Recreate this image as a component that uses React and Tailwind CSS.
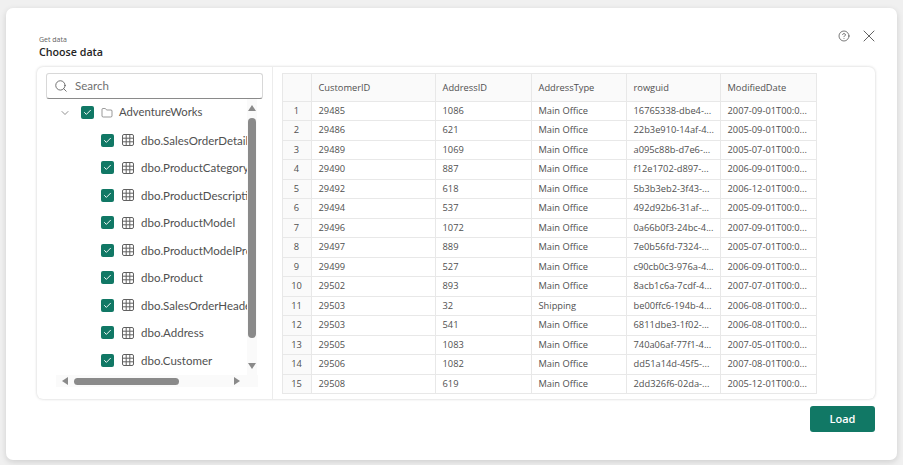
import React from "react";
import { Search, ChevronDown, Folder, X, CircleHelp, Check } from "lucide-react";

const tables = ["dbo.SalesOrderDetail","dbo.ProductCategory","dbo.ProductDescription","dbo.ProductModel","dbo.ProductModelProductDescription","dbo.Product","dbo.SalesOrderHeader","dbo.Address","dbo.Customer"];
const rows = [
["29485","1086","Main Office","16765338-dbe4-...","2007-09-01T00:0..."],
["29486","621","Main Office","22b3e910-14af-4...","2005-09-01T00:0..."],
["29489","1069","Main Office","a095c88b-d7e6-...","2005-07-01T00:0..."],
["29490","887","Main Office","f12e1702-d897-...","2006-09-01T00:0..."],
["29492","618","Main Office","5b3b3eb2-3f43-...","2006-12-01T00:0..."],
["29494","537","Main Office","492d92b6-31af-...","2005-09-01T00:0..."],
["29496","1072","Main Office","0a66b0f3-24bc-4...","2007-09-01T00:0..."],
["29497","889","Main Office","7e0b56fd-7324-...","2005-07-01T00:0..."],
["29499","527","Main Office","c90cb0c3-976a-4...","2006-09-01T00:0..."],
["29502","893","Main Office","8acb1c6a-7cdf-4...","2007-07-01T00:0..."],
["29503","32","Shipping","be00ffc6-194b-4...","2006-08-01T00:0..."],
["29503","541","Main Office","6811dbe3-1f02-...","2006-08-01T00:0..."],
["29505","1083","Main Office","740a06af-77f1-4...","2007-05-01T00:0..."],
["29506","1082","Main Office","dd51a14d-45f5-...","2007-08-01T00:0..."],
["29508","619","Main Office","2dd326f6-02da-...","2005-12-01T00:0..."],
];
const heads = ["CustomerID","AddressID","AddressType","rowguid","ModifiedDate"];

function Box() {
  return (
    <span className="flex h-[13px] w-[13px] shrink-0 items-center justify-center rounded-[2px] bg-[#117865]">
      <Check size={9} strokeWidth={2.5} className="text-white" />
    </span>
  );
}
function GridIcon() {
  return (
    <svg width="12" height="12" viewBox="0 0 12 12" fill="none" stroke="#616161" strokeWidth="1" className="shrink-0">
      <rect x="0.5" y="0.5" width="11" height="11" rx="1.5" />
      <path d="M4.2 .5V11.5M7.8 .5V11.5M.5 4.2H11.5M.5 7.8H11.5" />
    </svg>
  );
}

export default function App() {
  return (
    <div className="h-[465px] w-[903px] overflow-hidden bg-[#f0f0f0] pl-[6px] pt-[8px] font-['Open_Sans','Noto_Sans',sans-serif]">
      <div className="flex h-[452px] w-[891px] flex-col rounded-[7px] bg-white pl-[31px] pr-[22px] shadow-[0_2px_6px_rgba(0,0,0,0.14)]">
        <div className="flex h-[59px] shrink-0 items-start justify-between pl-[2px]">
          <div className="pt-[27px]">
            <div className="text-[7px] leading-[10px] text-[#616161]">Get data</div>
            <div className="text-[10.7px] font-semibold leading-[14px] text-[#242424]">Choose data</div>
          </div>
          <div className="-mr-[4px] flex items-center gap-[9px] pt-[18px]">
            <CircleHelp size={12} strokeWidth={1.4} className="text-[#424242]" />
            <X size={20} strokeWidth={1} className="text-[#424242]" />
          </div>
        </div>

        <div className="flex h-[332px] shrink-0 rounded-[6px] bg-white shadow-[0_0_3px_rgba(0,0,0,0.2)]">
          <div className="flex w-[236px] shrink-0 flex-col border-r border-[#ececec] pl-[9px] pt-[6px] font-['Lato','Open_Sans',sans-serif]">
            <div className="flex h-[26px] w-[217px] shrink-0 items-center gap-[7px] rounded-[3px] border border-[#d8d8d8] border-b-[#8a8a8a] pl-[7px]">
              <Search size={14} strokeWidth={1.4} className="text-[#555555]" />
              <span className="text-[11.5px] text-[#707070]">Search</span>
            </div>
            <div className="flex min-h-0 flex-1">
              <div className="flex w-[201px] shrink-0 flex-col overflow-hidden">
                <div className="flex h-[27.5px] shrink-0 items-center pl-[13px]">
                  <ChevronDown size={12} strokeWidth={1.4} className="mr-[10px] text-[#616161]" />
                  <Box />
                  <Folder size={12} strokeWidth={1.2} className="ml-[7px] text-[#555555]" />
                  <span className="ml-[6px] whitespace-nowrap text-[11.3px] text-[#505050]">AdventureWorks</span>
                </div>
                {tables.map((t) => (
                  <div key={t} className="flex h-[27.5px] shrink-0 items-center pl-[55px]">
                    <Box />
                    <span className="ml-[8px]"><GridIcon /></span>
                    <span className="ml-[7px] whitespace-nowrap text-[11.5px] text-[#505050]">{t}</span>
                  </div>
                ))}
              </div>
              <div className="flex w-[10px] shrink-0 flex-col items-center bg-[#fafafa] pt-[6px]">
                <svg width="8" height="6" viewBox="0 0 8 6" fill="#8a8a8a" className="shrink-0"><path d="M4 0L8 6H0Z" /></svg>
                <div className="mt-[7px] h-[220px] w-[8px] shrink-0 rounded-full bg-[#8a8a8a]" />
                <svg width="8" height="6" viewBox="0 0 8 6" fill="#8a8a8a" className="mt-[25px] shrink-0"><path d="M0 0H8L4 6Z" /></svg>
              </div>
            </div>
            <div className="mb-[12px] ml-[10px] flex h-[12px] w-[202px] shrink-0 items-center bg-[#fafafa] pl-[6px]">
              <svg width="6" height="8" viewBox="0 0 6 8" fill="#8a8a8a" className="shrink-0"><path d="M6 0V8L0 4Z" /></svg>
              <div className="ml-[6px] h-[7px] w-[105px] shrink-0 rounded-full bg-[#8a8a8a]" />
              <svg width="6" height="8" viewBox="0 0 6 8" fill="#8a8a8a" className="ml-[55px] shrink-0"><path d="M0 0V8L6 4Z" /></svg>
            </div>
          </div>

          <div className="pl-[8.5px] pt-[6px]">
            <table className="w-[534px] table-fixed border-collapse text-[9.3px] text-[#505050]">
              <colgroup>
                <col className="w-[29px]" /><col className="w-[124px]" /><col className="w-[96px]" /><col className="w-[95px]" /><col className="w-[94px]" /><col className="w-[96px]" />
              </colgroup>
              <thead>
                <tr className="h-[27.5px] bg-[#fafafa]">
                  <th className="border border-[#e8e8e8]" />
                  {heads.map((h) => (
                    <th key={h} className="border border-[#e8e8e8] pl-[7px] pt-[1px] text-left font-normal">{h}</th>
                  ))}
                </tr>
              </thead>
              <tbody>
                {rows.map((r, i) => (
                  <tr key={i} className="h-[19.5px]">
                    <td className="border border-[#e8e8e8] bg-[#fafafa] p-0 text-center">{i + 1}</td>
                    {r.map((c, j) => (
                      <td key={j} className="overflow-hidden whitespace-nowrap border border-[#e8e8e8] p-0 pl-[7px]">{c}</td>
                    ))}
                  </tr>
                ))}
              </tbody>
            </table>
          </div>
        </div>

        <div className="flex justify-end pt-[7px]">
          <button className="h-[26px] w-[65px] rounded-[3px] bg-[#117865] text-[11px] font-semibold text-white">Load</button>
        </div>
      </div>
    </div>
  );
}
